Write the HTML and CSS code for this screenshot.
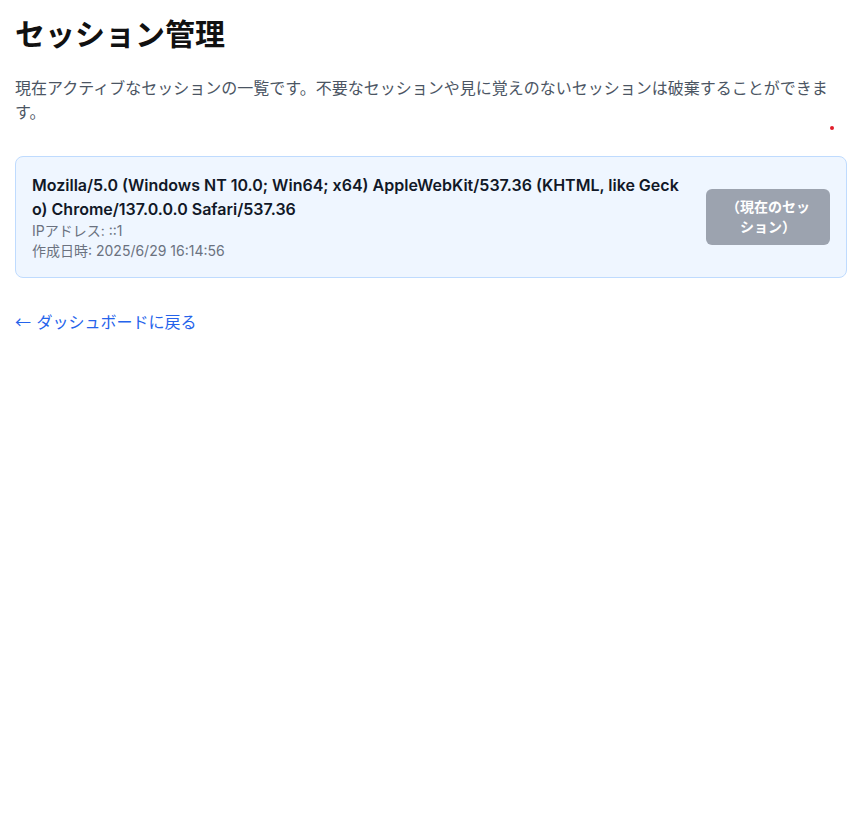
FILE: index.html
```html
<!DOCTYPE html>
<html lang="ja">
<head>
<meta charset="utf-8">
<title>セッション管理</title>
<link rel="stylesheet" href="styles.css">
</head>
<body>
<div class="page">
  <h1 class="title">セッション管理</h1>
  <p class="desc">現在アクティブなセッションの一覧です。不要なセッションや見に覚えのないセッションは破棄することができます。</p>
  <span class="dot"></span>
  <ul class="sessions">
    <li class="card">
      <div class="info">
        <div class="ua">Mozilla/5.0 (Windows NT 10.0; Win64; x64) AppleWebKit/537.36 (KHTML, like Gecko) Chrome/137.0.0.0 Safari/537.36</div>
        <div class="meta">IPアドレス: ::1</div>
        <div class="meta">作成日時: 2025/6/29 16:14:56</div>
      </div>
      <button class="btn" disabled>（現在のセッション）</button>
    </li>
  </ul>
  <a class="back" href="#"><span class="arrow">←</span> ダッシュボードに戻る</a>
</div>
</body>
</html>
```
FILE: styles.css
```css
* { box-sizing: border-box; }
html, body { margin: 0; padding: 0; background: #fff; }
body {
  font-family: Inter, "Noto Sans CJK JP", sans-serif;
  color: #111827;
}
.page {
  position: relative;
  padding: 16px 11px 16px 15px;
}
.title {
  margin: 0 0 24px 0;
  font-size: 30px;
  line-height: 36px;
  font-weight: 700;
  color: #111111;
}
.desc {
  margin: 0 0 32px 0;
  font-size: 16px;
  line-height: 24px;
  color: #4b5563;
  line-break: strict;
}
.dot {
  position: absolute;
  left: 830px;
  top: 126px;
  width: 4px;
  height: 4px;
  border-radius: 50%;
  background: #e11d2a;
}
.sessions {
  list-style: none;
  margin: 0 0 32px 0;
  padding: 0;
}
.card {
  display: flex;
  align-items: center;
  justify-content: space-between;
  gap: 24px;
  padding: 16px;
  border: 1px solid #bfdbfe;
  border-radius: 8px;
  background: #eff6ff;
}
.info { flex: 1; min-width: 0; }
.ua {
  font-size: 16px;
  line-height: 24px;
  font-weight: 600;
  color: #111827;
  word-break: break-all;
}
.meta {
  font-size: 14px;
  line-height: 20px;
  color: #6b7280;
}
.btn {
  flex: 0 0 124px;
  width: 124px;
  padding: 8px 16px;
  border: none;
  border-radius: 6px;
  background: #9ca3af;
  color: #fff;
  font-family: Inter, "Noto Sans CJK JP", sans-serif;
  font-size: 14px;
  line-height: 20px;
  font-weight: 600;
  text-align: center;
}
.back {
  display: inline-block;
  font-size: 16px;
  line-height: 24px;
  color: #2563eb;
  text-decoration: none;
}
.arrow {
  font-family: "Noto Sans CJK JP", sans-serif;
  line-height: 1;
  margin-right: 1px;
}
```
